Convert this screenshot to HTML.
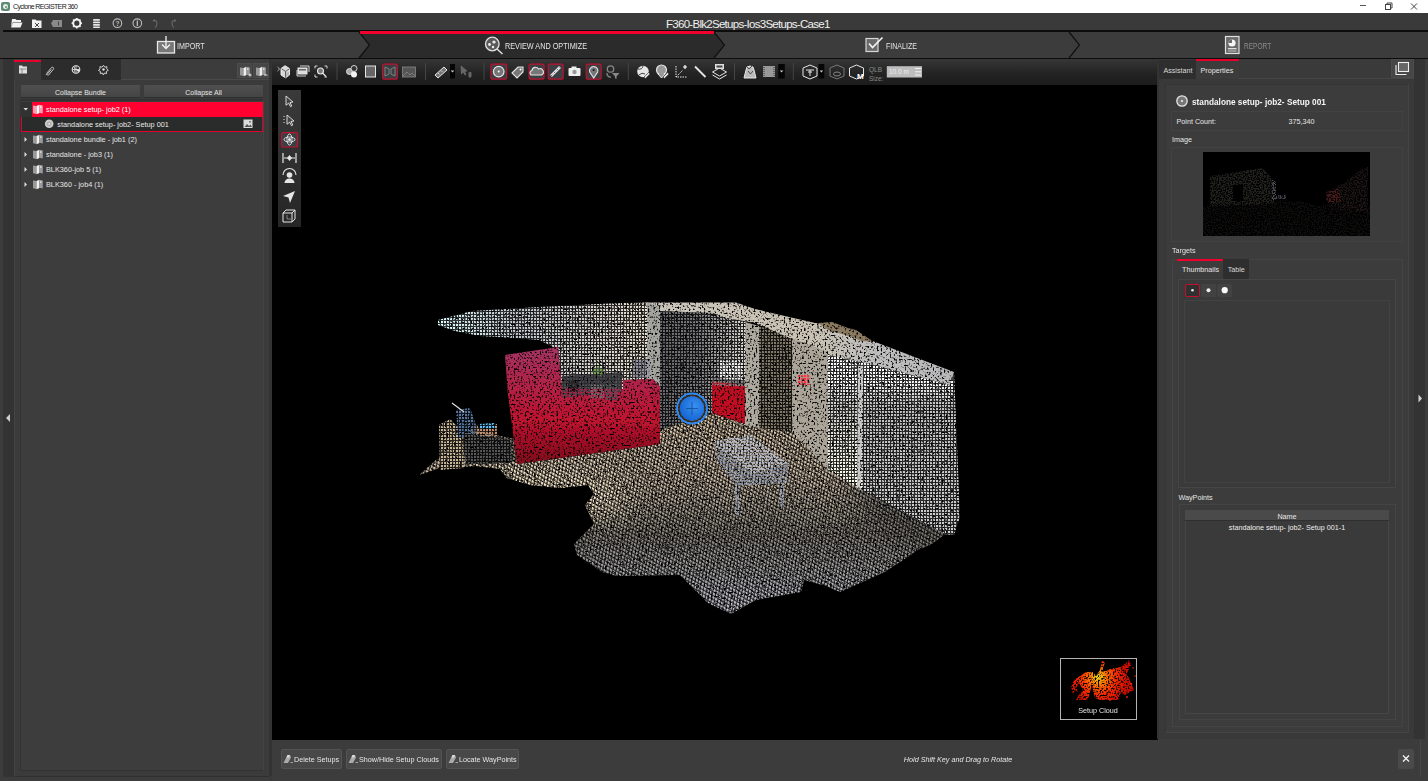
<!DOCTYPE html>
<html><head><meta charset="utf-8">
<style>
*{box-sizing:border-box;margin:0;padding:0}
html,body{width:1428px;height:781px;overflow:hidden;background:#3c3c3c;font-family:"Liberation Sans",sans-serif;color:#e6e6e6}
.a{position:absolute}
.t{position:absolute;white-space:nowrap;line-height:1}
svg{position:absolute;overflow:visible}
</style></head><body>
<!-- title bar -->
<div class="a" style="left:0;top:0;width:1428px;height:13px;background:#fff"></div>
<div class="a" style="left:1px;top:2px;width:9px;height:9px;border-radius:2px;background:#5f8a74"></div>
<div class="a" style="left:3px;top:4px;width:5px;height:5px;border-radius:50%;background:#e8efe9"></div>
<div class="a" style="left:5px;top:6px;width:2px;height:2px;border-radius:50%;background:#5f8a74"></div>
<div class="t" style="left:13px;top:3.2px;font-size:7px;color:#1a1a1a;letter-spacing:-0.62px">Cyclone REGISTER 360</div>
<div class="a" style="left:1360px;top:5px;width:6px;height:1px;background:#555"></div>
<svg class="a" style="left:0;top:0" width="1428" height="13"><rect x="1385.5" y="4.5" width="5" height="5" fill="none" stroke="#444" stroke-width="1"/><path d="M1387,4.5 v-1.5 h5 v5 h-1.5" fill="none" stroke="#444" stroke-width="1"/></svg>
<svg class="a" style="left:0;top:0" width="1428" height="13"><path d="M1411,3.5 l6,6 M1417,3.5 l-6,6" stroke="#444" stroke-width="1"/></svg>

<!-- top bar -->
<div class="a" style="left:0;top:13px;width:1428px;height:18px;background:#3a3a3a"></div>
<svg class="a" style="left:0;top:0" width="200" height="32">
 <g fill="#f2f2f2">
  <path d="M12,19 h3.5 l1,1 h4.5 v2 h-8 l-2,5 z"/><path d="M13,22.5 h9.5 l-2,5 h-9.5 z"/>
  <path d="M32,19.5 h3.5 l1,1 h5 v7.5 h-9.5 z"/>
 </g>
 <path d="M35,23 l4,4 M39,23 l-4,4" stroke="#444" stroke-width="1"/>
 <path d="M53,20 h9 v7 h-9 l-2,-3.5 z" fill="#8a8a8a"/><rect x="58" y="21.5" width="1" height="4" fill="#444"/>
 <g transform="translate(76.8,23.2)"><circle r="3.6" fill="none" stroke="#f2f2f2" stroke-width="2"/>
  <g stroke="#f2f2f2" stroke-width="1.6"><path d="M0,-5.2 v2 M0,5.2 v-2 M-5.2,0 h2 M5.2,0 h-2 M-3.7,-3.7 l1.4,1.4 M3.7,3.7 l-1.4,-1.4 M-3.7,3.7 l1.4,-1.4 M3.7,-3.7 l-1.4,1.4"/></g></g>
 <g fill="#e8e8e8"><rect x="93" y="19" width="7" height="1.8" rx="0.9"/><rect x="93" y="21.5" width="7" height="1.8" rx="0.9"/><rect x="93" y="24" width="7" height="1.8" rx="0.9"/><rect x="93" y="26.5" width="7" height="1.5" rx="0.7"/></g>
 <circle cx="117.4" cy="23.2" r="4.3" fill="none" stroke="#bdbdbd" stroke-width="1.1"/><text x="117.4" y="26" font-size="6.5" text-anchor="middle" fill="#bdbdbd" font-family="Liberation Sans" font-weight="bold">?</text>
 <circle cx="137.3" cy="23.2" r="4.3" fill="none" stroke="#bdbdbd" stroke-width="1.1"/><rect x="136.7" y="20.5" width="1.3" height="5.5" fill="#bdbdbd"/>
 <path d="M153.5,20.5 q3.5,-0.5 3.5,3 q0,2.5 -2,4" fill="none" stroke="#6a6a6a" stroke-width="1.1"/><path d="M152.5,20.5 l2,-1.8 v3.6 z" fill="#6a6a6a"/>
 <path d="M175.5,20.5 q-3.5,-0.5 -3.5,3 q0,2.5 2,4" fill="none" stroke="#6a6a6a" stroke-width="1.1"/><path d="M176.5,20.5 l-2,-1.8 v3.6 z" fill="#6a6a6a"/>
</svg>
<div class="t" style="left:666px;top:19px;font-size:11.5px;color:#f0f0f0;letter-spacing:-0.72px">F360-Blk2Setups-Ios3Setups-Case1</div>
<div class="a" style="left:3px;top:30px;width:1425px;height:2px;background:#0c0c0c"></div>

<!-- stepper -->
<div class="a" style="left:0;top:32px;width:1428px;height:26px;background:#3c3c3c"></div>
<svg class="a" style="left:0;top:0" width="1428" height="60">
  <polygon points="359,32 714,32 724.5,45 714,58 359,58 369.5,45" fill="#2b2b2b"/>
  <polyline points="359,32 369.5,45 359,58" fill="none" stroke="#111" stroke-width="1.2"/>
  <polyline points="714,32 724.5,45 714,58" fill="none" stroke="#111" stroke-width="1.2"/>
  <polyline points="1069,32 1079.5,45 1069,58" fill="none" stroke="#111" stroke-width="1.2"/>
  <rect x="360" y="31" width="354" height="3" fill="#f0002d"/>
</svg>
<div class="a" style="left:0;top:58px;width:1428px;height:1px;background:#0c0c0c"></div>
<svg class="a" style="left:0;top:0" width="1428" height="60">
 <rect x="157.5" y="41.5" width="17" height="11.5" fill="#777" stroke="#e8e8e8" stroke-width="1.3"/>
 <path d="M166,36 v12" stroke="#f4f4f4" stroke-width="1.3"/><path d="M162,44.5 l4,4 l4,-4" fill="none" stroke="#f4f4f4" stroke-width="1.3"/>
 <circle cx="492.3" cy="44" r="6.8" fill="#5a5a5a" stroke="#e0e0e0" stroke-width="1.3"/>
 <circle cx="489.5" cy="44.5" r="1.4" fill="#eee"/><circle cx="494" cy="42" r="1.6" fill="#eee"/><circle cx="493" cy="47" r="1.2" fill="#eee"/>
 <path d="M497,49 l5.5,5" stroke="#e0e0e0" stroke-width="1.5"/>
 <rect x="866" y="38.5" width="12" height="13" fill="#6a6a6a" stroke="#d6d6d6" stroke-width="1.2"/>
 <path d="M869,43.5 l3.5,4 l10,-10" fill="none" stroke="#f4f4f4" stroke-width="1.6"/>
 <rect x="1225.5" y="36.5" width="13.5" height="17" fill="#6a6a6a" stroke="#e0e0e0" stroke-width="1.2"/>
 <circle cx="1232" cy="43" r="3.6" fill="#f4f4f4"/><path d="M1232,43 v-3.6 a3.6,3.6 0 0 0 -3.6,3.6 z" fill="#6a6a6a"/>
 <rect x="1228" y="48" width="8.5" height="1.3" fill="#ddd"/><rect x="1228" y="50.5" width="8.5" height="1" fill="#bbb"/>
</svg>
<div class="t" style="left:177px;top:43px;font-size:8.2px;color:#e4e4e4;transform:scaleX(0.87);transform-origin:left">IMPORT</div>
<div class="t" style="left:505.3px;top:43px;font-size:8.2px;color:#e4e4e4;transform:scaleX(0.888);transform-origin:left">REVIEW AND OPTIMIZE</div>
<div class="t" style="left:885.7px;top:43px;font-size:8.2px;color:#e4e4e4;transform:scaleX(0.86);transform-origin:left">FINALIZE</div>
<div class="t" style="left:1243.5px;top:43px;font-size:8.2px;color:#8c8c8c;transform:scaleX(0.8);transform-origin:left">REPORT</div>

<!-- main left strips -->
<div class="a" style="left:3px;top:59px;width:11px;height:718px;background:#333"></div>
<svg class="a" style="left:0;top:0" width="20" height="430"><polygon points="10,414 6,418 10,422" fill="#cfcfcf"/></svg>

<!-- left panel -->
<div class="a" style="left:14px;top:59px;width:256px;height:718px;background:#3b3b3b"></div>
<div class="a" style="left:121px;top:59px;width:148px;height:21px;background:#3c3c3c;border-bottom:1px solid #4a4a4a"></div>
<div class="a" style="left:41px;top:59px;width:80px;height:21px;background:#2c2c2c"></div>
<div class="a" style="left:14px;top:59px;width:27px;height:21px;background:#3c3c3c"></div>
<div class="a" style="left:14px;top:60px;width:27px;height:2px;background:#e8002c"></div>
<div class="a" style="left:237px;top:63px;width:15px;height:15px;background:#464646;border:1px solid #4c4c4c"></div>
<div class="a" style="left:253px;top:63px;width:16px;height:15px;background:#464646;border:1px solid #4c4c4c"></div>
<div class="a" style="left:14px;top:80px;width:256px;height:697px;background:#3b3b3b;border:1px solid #444;border-top:none;border-bottom-color:#2f2f2f"></div>
<div class="a" style="left:20px;top:99px;width:244px;height:672px;background:#3d3d3d;border:1px solid #333;border-top-width:2px;border-right-color:#444"></div>
<div class="a" style="left:21px;top:85px;width:119px;height:12px;background:linear-gradient(#4f4f4f,#454545);border-radius:1px;box-shadow:0 1px 0 #2e2e2e"></div>
<div class="a" style="left:144px;top:85px;width:119px;height:12px;background:linear-gradient(#4f4f4f,#454545);border-radius:1px;box-shadow:0 1px 0 #2e2e2e"></div>
<div class="t" style="left:80.5px;top:88.5px;font-size:7px;color:#e6e6e6;transform:translateX(-50%)">Collapse Bundle</div>
<div class="t" style="left:203.5px;top:88.5px;font-size:7px;color:#e6e6e6;transform:translateX(-50%)">Collapse All</div>
<div class="a" style="left:21px;top:102px;width:11px;height:15px;background:#323232"></div>
<div class="a" style="left:32px;top:102px;width:231px;height:15px;background:#ff0030"></div>
<div class="a" style="left:21px;top:117px;width:242px;height:15px;background:#2a2b2b;border:1.5px solid #e0002c;border-top:none"></div>
<svg class="a" style="left:0;top:0" width="280" height="200">
 <g fill="#ddd"><polygon points="23.5,108 28,108 25.75,110.5"/>
 <polygon points="24.5,137 27,139.5 24.5,142"/><polygon points="24.5,152 27,154.5 24.5,157"/><polygon points="24.5,167 27,169.5 24.5,172"/><polygon points="24.5,182 27,184.5 24.5,187"/></g>
 <path d="M33,105.5 l3.5,0.5 v8 l-3.5,-0.8 z" fill="#f5a0b0"/><path d="M36.5,106.0 l3,-1.2 v8.2 l-3,1.2 z" fill="#ffffff"/><path d="M39.5,104.8 l3.3,0.6 v8 l-3.3,-0.6 z" fill="#f5a0b0"/><circle cx="40.8" cy="107.1" r="0.8" fill="#ffffff"/><path d="M33,135.5 l3.5,0.5 v8 l-3.5,-0.8 z" fill="#9a9a9a"/><path d="M36.5,136.0 l3,-1.2 v8.2 l-3,1.2 z" fill="#f0f0f0"/><path d="M39.5,134.8 l3.3,0.6 v8 l-3.3,-0.6 z" fill="#9a9a9a"/><circle cx="40.8" cy="137.1" r="0.8" fill="#f0f0f0"/><path d="M33,150.5 l3.5,0.5 v8 l-3.5,-0.8 z" fill="#9a9a9a"/><path d="M36.5,151.0 l3,-1.2 v8.2 l-3,1.2 z" fill="#f0f0f0"/><path d="M39.5,149.8 l3.3,0.6 v8 l-3.3,-0.6 z" fill="#9a9a9a"/><circle cx="40.8" cy="152.1" r="0.8" fill="#f0f0f0"/><path d="M33,165.5 l3.5,0.5 v8 l-3.5,-0.8 z" fill="#9a9a9a"/><path d="M36.5,166.0 l3,-1.2 v8.2 l-3,1.2 z" fill="#f0f0f0"/><path d="M39.5,164.8 l3.3,0.6 v8 l-3.3,-0.6 z" fill="#9a9a9a"/><circle cx="40.8" cy="167.1" r="0.8" fill="#f0f0f0"/><path d="M33,180.5 l3.5,0.5 v8 l-3.5,-0.8 z" fill="#9a9a9a"/><path d="M36.5,181.0 l3,-1.2 v8.2 l-3,1.2 z" fill="#f0f0f0"/><path d="M39.5,179.8 l3.3,0.6 v8 l-3.3,-0.6 z" fill="#9a9a9a"/><circle cx="40.8" cy="182.1" r="0.8" fill="#f0f0f0"/>
 <circle cx="49.2" cy="123.8" r="4.3" fill="#cfcfcf"/><circle cx="49.2" cy="123.8" r="2.6" fill="#b0b0b0"/><circle cx="49.2" cy="123.8" r="0.9" fill="#eee"/>
 <rect x="243.5" y="119.5" width="9" height="8.5" fill="#ddd"/><path d="M244.5,127 l2.5,-3 l2,2 l1.5,-1.5 l1.5,2.5 z" fill="#555"/><circle cx="250" cy="121.8" r="0.9" fill="#555"/>
 <!-- tab icons -->
 <rect x="19" y="66.5" width="8" height="7" fill="#e0e0e0"/><rect x="19" y="65.5" width="3.5" height="1.5" fill="#e0e0e0"/><path d="M19.5,69 h7 M22,69 v4" stroke="#666" stroke-width="0.7"/>
 <path d="M46.5,73.5 l5,-6 a1.3,1.3 0 0 1 2,1.6 l-5,6 a0.8,0.8 0 0 1 -1.2,-1 l4,-4.6" fill="none" stroke="#d0d0d0" stroke-width="0.9"/><path d="M45.8,74.5 l1.2,-0.3" stroke="#d0d0d0" stroke-width="0.9"/>
 <circle cx="76" cy="69.5" r="3.8" fill="none" stroke="#e8e8e8" stroke-width="1.1"/><path d="M72.5,69.5 h7 M76,66 v7 M74,66.8 q2,2.7 0,5.4" stroke="#e8e8e8" stroke-width="0.8" fill="none"/><path d="M76,69.5 l3.5,0 a3.5,3.5 0 0 1 -1.2,2.7 z" fill="#e8e8e8"/>
 <g transform="translate(103.5,69.5)"><path d="M0,-4.2 l1.2,1.8 l2.2,-0.4 l-0.2,2.2 l1.6,1.5 l-1.9,1 l0.1,2.2 l-2.1,-0.6 l-1,2 l-1,-2 l-2.1,0.6 l0.1,-2.2 l-1.9,-1 l1.6,-1.5 l-0.2,-2.2 l2.2,0.4 z" fill="none" stroke="#e0e0e0" stroke-width="0.9"/><circle r="1.2" fill="#e0e0e0"/></g>
 <!-- header buttons -->
 <path d="M240.0,67.5 l3.5,0.5 v8 l-3.5,-0.8 z" fill="#9a9a9a"/><path d="M243.5,68.0 l3,-1.2 v8.2 l-3,1.2 z" fill="#f0f0f0"/><path d="M246.5,66.8 l3.3,0.6 v8 l-3.3,-0.6 z" fill="#9a9a9a"/><circle cx="247.8" cy="69.1" r="0.8" fill="#f0f0f0"/><path d="M248.5,75 h3 M250,73.5 v3" stroke="#eee" stroke-width="0.9"/><path d="M256.0,67.5 l3.5,0.5 v8 l-3.5,-0.8 z" fill="#9a9a9a"/><path d="M259.5,68.0 l3,-1.2 v8.2 l-3,1.2 z" fill="#f0f0f0"/><path d="M262.5,66.8 l3.3,0.6 v8 l-3.3,-0.6 z" fill="#9a9a9a"/><circle cx="263.8" cy="69.1" r="0.8" fill="#f0f0f0"/><path d="M264,75 h3.5" stroke="#eee" stroke-width="0.9"/>
</svg>
<div class="t" style="left:46px;top:105.7px;font-size:7.3px;color:#fff">standalone setup- job2 (1)</div>
<div class="t" style="left:57.3px;top:120.7px;font-size:7.3px;color:#eaeaea">standalone setup- job2- Setup 001</div>
<div class="t" style="left:46px;top:135.9px;font-size:7.3px;color:#e6e6e6">standalone bundle - job1 (2)</div>
<div class="t" style="left:46px;top:150.9px;font-size:7.3px;color:#e6e6e6">standalone - job3 (1)</div>
<div class="t" style="left:46px;top:165.9px;font-size:7.3px;color:#e6e6e6">BLK360-job 5 (1)</div>
<div class="t" style="left:46px;top:180.9px;font-size:7.3px;color:#e6e6e6">BLK360 - job4 (1)</div>

<!-- viewport -->
<div class="a" style="left:269px;top:59px;width:3px;height:719px;background:#333"></div>
<div class="a" style="left:272px;top:59px;width:886px;height:26px;background:linear-gradient(#363636,#222 60%,#1c1c1c)"></div>
<div class="a" style="left:272px;top:85px;width:886px;height:655px;background:#000"></div>
<svg class="a" style="left:0;top:0" width="1000" height="90"><path d="M277.5,67 l2.2,2 l-2.2,2" fill="none" stroke="#cfcfcf" stroke-width="0.8"/><path d="M281,68.5 l4,-2.8 l4.5,2.8 v6.5 l-4,2.8 l-4.5,-2.8 z" fill="#d8d8d8" stroke="#f0f0f0" stroke-width="0.9"/><path d="M281.5,68.8 l4,2.6 l4,-2.6 M285.5,71.4 v6.2" fill="none" stroke="#444" stroke-width="0.8"/><path d="M286.8,72.5 v4 M288.2,71.8 v4" stroke="#888" stroke-width="0.6"/><rect x="298" y="68" width="9" height="6" fill="#ddd" stroke="#e6e6e6"/><path d="M297,70 v6 h9 M300,66 h9 v6" fill="none" stroke="#e6e6e6" stroke-width="0.9"/><rect x="299" y="69" width="7" height="1.5" fill="#666"/><path d="M315,66 v2.5 M315,66 h2.5 M327,66 v2.5 M327,66 h-2.5 M315,77 v-2.5 M315,77 h2.5 M327,77 h-2.5" stroke="#e6e6e6" stroke-width="0.9"/><circle cx="320.5" cy="71" r="3" fill="#777" stroke="#e6e6e6" stroke-width="1.1"/><path d="M322.5,73 l3.5,3.5" stroke="#e6e6e6" stroke-width="1.3"/><rect x="336.5" y="63" width="1" height="17" fill="#444"/><circle cx="349.5" cy="71.5" r="3" fill="#aaa" stroke="#e6e6e6" stroke-width="0.9"/><circle cx="354" cy="68.5" r="3" fill="#333" stroke="#e6e6e6" stroke-width="0.9"/><circle cx="354" cy="74.5" r="3" fill="#f2f2f2"/><rect x="365.5" y="66" width="10" height="11" fill="#666" stroke="#e6e6e6" stroke-width="1"/><rect x="382.6" y="64.1" width="14.8" height="15.099999999999998" rx="2" fill="#3a3f44" stroke="#c0112e" stroke-width="1.2"/><path d="M385,67 l4,2 v5 l-4,2 z M395,67 l-4,2 v5 l4,2 z" fill="none" stroke="#888" stroke-width="0.9"/><rect x="402.5" y="67" width="13" height="10" fill="#555" stroke="#888" stroke-width="0.8"/><path d="M403,76 l4,-4 l3,3 l2,-2 l3,3" fill="none" stroke="#888" stroke-width="0.8"/><rect x="425" y="63" width="1" height="17" fill="#444"/><path d="M435,75 l9,-8 l3,3 l-9,8 z" fill="#777" stroke="#e6e6e6" stroke-width="1"/><path d="M438,73 l1.5,1.5 M441,70.5 l1.5,1.5" stroke="#e6e6e6" stroke-width="0.8"/><rect x="450" y="64" width="5" height="14.5" fill="#050505"/><polygon points="450.7,70.5 454.3,70.5 452.5,72.5" fill="#ccc"/><path d="M461,66 l6,5 l-2.5,0.5 l1.5,3 l-1,0.5 l-1.5,-3 l-2,2 z" fill="#666" stroke="#777" stroke-width="0.6"/><rect x="468.5" y="72" width="3" height="5.5" rx="1" fill="#666"/><rect x="483.5" y="63" width="1" height="17" fill="#444"/><rect x="490.90000000000003" y="64.1" width="15.699999999999978" height="15.099999999999998" rx="2" fill="#3a3f44" stroke="#c0112e" stroke-width="1.2"/><circle cx="498.7" cy="71.6" r="5.3" fill="#777" stroke="#e6e6e6" stroke-width="1.2"/><circle cx="498.7" cy="71.6" r="1" fill="#fff"/><path d="M512,73 l6,-6 h5 v5 l-6,6 z" fill="#777" stroke="#e6e6e6" stroke-width="1.1"/><circle cx="520.5" cy="69.5" r="1" fill="#fff"/><rect x="529.1" y="64.1" width="15.000000000000046" height="15.099999999999998" rx="2" fill="#3a3f44" stroke="#c0112e" stroke-width="1.2"/><path d="M531,75 a2.5,2.5 0 0 1 1,-4.5 a3.5,3.5 0 0 1 6.5,-1.5 a2.8,2.8 0 0 1 3,6 z" fill="#777" stroke="#e6e6e6" stroke-width="1.1"/><rect x="548.2" y="64.1" width="14.999999999999932" height="15.099999999999998" rx="2" fill="#3a3f44" stroke="#c0112e" stroke-width="1.2"/><path d="M551,76 l9,-9" stroke="#e6e6e6" stroke-width="2.6"/><path d="M551,76 l9,-9" stroke="#555" stroke-width="0.8" stroke-dasharray="2 2"/><rect x="568.5" y="68" width="12" height="8" rx="1" fill="#eee"/><rect x="571.5" y="66.5" width="5" height="2" fill="#eee"/><circle cx="574.5" cy="72" r="2.2" fill="#999"/><rect x="586.2" y="64.1" width="14.999999999999932" height="15.099999999999998" rx="2" fill="#3a3f44" stroke="#c0112e" stroke-width="1.2"/><path d="M593.7,78 l-4,-6 a4.2,4.2 0 1 1 8,0 z" fill="#777" stroke="#e6e6e6" stroke-width="1.1"/><circle cx="593.7" cy="70" r="1" fill="#111"/><circle cx="610.5" cy="69" r="3.2" fill="none" stroke="#888" stroke-width="1.3"/><path d="M607,73 a3.5,3.5 0 0 0 4,4" fill="none" stroke="#888" stroke-width="1.3"/><path d="M612,73 h7.5 l-3,3.5 v2.5 l-1.5,-0.8 v-1.7 z" fill="#888"/><rect x="627.8" y="63" width="1" height="17" fill="#444"/><circle cx="643" cy="71.5" r="5.8" fill="#e6e6e6"/><path d="M638,69 q4,1 5,-3 M639,75 q3,-3 6,-1" stroke="#444" stroke-width="1" fill="none"/><path d="M644,77 l4.5,-4.5 l1.5,1.5 l-4.5,4.5 z" fill="#ddd" stroke="#333" stroke-width="0.6"/><circle cx="661.5" cy="70" r="5" fill="#999" stroke="#e6e6e6" stroke-width="1.2"/><path d="M658,74 l3.5,4 l3.5,-4" fill="#999" stroke="#e6e6e6"/><path d="M663,77 l4.5,-4.5 l1.5,1.5 l-4.5,4.5 z" fill="#ddd" stroke="#333" stroke-width="0.6"/><path d="M676,66 v11 h11 M676,77 l7,-7" fill="none" stroke="#e6e6e6" stroke-width="1" stroke-dasharray="1.5 1"/><path d="M683,67 h4 M685,65 v4" stroke="#fff" stroke-width="1.2"/><path d="M695,66.5 l3,3 M697.5,69 l8,8" stroke="#e6e6e6" stroke-width="1.8"/><path d="M712.5,72 l7,-4 l7,4 l-7,4 z" fill="none" stroke="#e6e6e6" stroke-width="1"/><path d="M712.5,75 l7,4 l7,-4" fill="none" stroke="#e6e6e6" stroke-width="1"/><rect x="715" y="64" width="9" height="5" fill="#ddd"/><rect x="716.5" y="65.5" width="6" height="2" fill="#444"/><rect x="734" y="63" width="1" height="17" fill="#444"/><path d="M744,78 l2,-8 a4,4 0 0 1 8,0 l2,8 z" fill="#bbb" stroke="#e6e6e6" stroke-width="1"/><path d="M746,66 l3,3 l3,-3 M748,71 l2.5,3 l2.5,-3" stroke="#333" stroke-width="0.8" fill="none"/><rect x="763" y="66" width="12" height="11" fill="#999"/><path d="M764,67 v9 M774,67 v9" stroke="#333" stroke-width="1" stroke-dasharray="1 1"/><rect x="778.3" y="64" width="6.5" height="14.5" fill="#050505"/><polygon points="779.75,70.5 783.3499999999999,70.5 781.55,72.5" fill="#ccc"/><rect x="792.8" y="63" width="1" height="17" fill="#444"/><path d="M803,68 l7,-3 l7,3 v8 l-7,3 l-7,-3 z" fill="none" stroke="#e6e6e6" stroke-width="1"/><path d="M806,70 h8 M810,70 v6 M808,72 h4" stroke="#e6e6e6" stroke-width="1"/><rect x="818.5" y="64" width="5.7999999999999545" height="14.5" fill="#050505"/><polygon points="819.6,70.5 823.1999999999999,70.5 821.4,72.5" fill="#ccc"/><path d="M830,68 l7,-3 l7,3 v8 l-7,3 l-7,-3 z" fill="none" stroke="#777" stroke-width="1"/><ellipse cx="837" cy="74" rx="3.5" ry="2" fill="none" stroke="#888" stroke-width="1"/><path d="M849.5,68 l7,-3 l7,3 v8 l-7,3 l-7,-3 z" fill="none" stroke="#e6e6e6" stroke-width="1"/><text x="857" y="78.5" font-size="8" font-weight="bold" font-family="Liberation Sans" fill="#fff">M</text><rect x="886.8" y="66.2" width="35.2" height="11.3" fill="#bdbdbd"/><path d="M915,68.5 h6 M915,71.8 h6 M915,75 h6" stroke="#f2f2f2" stroke-width="1"/></svg><div class="t" style="left:869px;top:64.5px;font-size:6.5px;color:#8a8a8a;line-height:9.5px">QLB<br>Size:</div><div class="t" style="left:889px;top:68.5px;font-size:6.5px;color:#eee">10.0 m</div><div class="a" style="left:278px;top:90px;width:23px;height:137px;background:linear-gradient(#3a3a3a,#262626)"></div><svg class="a" style="left:0;top:0" width="320" height="240"><rect x="281.6" y="132.6" width="16" height="14.4" rx="2" fill="#3a3f44" stroke="#c0112e" stroke-width="1.2"/><path d="M286,96 l7,6 l-3,0.5 l1.8,3.5 l-1.3,0.7 l-1.8,-3.5 l-2.7,2 z" fill="#444" stroke="#e6e6e6" stroke-width="0.9"/><path d="M287,115 l7,6 l-3,0.5 l1.8,3.5 l-1.3,0.7 l-1.8,-3.5 l-2.7,2 z" fill="#444" stroke="#e6e6e6" stroke-width="0.9"/><path d="M284,116 v1 M284,119 v1 M284,122 v1" stroke="#e6e6e6"/><ellipse cx="289.5" cy="139.5" rx="5.5" ry="2.5" fill="none" stroke="#e6e6e6" stroke-width="1"/><ellipse cx="289.5" cy="139.5" rx="2.5" ry="5.5" fill="none" stroke="#e6e6e6" stroke-width="1"/><circle cx="289.5" cy="139.5" r="1.5" fill="#e6e6e6"/><path d="M283,153 v10 M296,153 v10 M284,158 h11" stroke="#e6e6e6" stroke-width="1.2"/><path d="M289.5,155 l2.5,3 l-2.5,3 l-2.5,-3 z" fill="#e6e6e6"/><circle cx="289.5" cy="175" r="2.8" fill="#e6e6e6"/><path d="M284.5,183 a5,4.5 0 0 1 10,0 z" fill="#e6e6e6"/><path d="M283,175 a6.5,6.5 0 0 1 13,0" fill="none" stroke="#e6e6e6" stroke-width="1.1"/><path d="M283,196 l12,-5 l-5,12 l-1.5,-5.5 z" fill="#e6e6e6"/><path d="M283,213 h9 v9 h-9 z M283,213 l3,-3 h9 l-3,3 M295,210 v9 l-3,3" fill="none" stroke="#e6e6e6" stroke-width="1"/><path d="M287,215 v4 h4" fill="none" stroke="#aaa" stroke-width="0.7"/></svg>
<!--CLOUD--><svg class="a" style="left:0;top:0" width="1428" height="781">
<defs>
<filter id="n85" filterUnits="userSpaceOnUse" x="272" y="85" width="886" height="655">
 <feTurbulence type="fractalNoise" baseFrequency="0.537" numOctaves="1" seed="3" result="n"/>
 <feColorMatrix in="n" type="matrix" values="0 0 0 0 1  0 0 0 0 1  0 0 0 0 1  6 0 0 0 -1.8" result="m"/>
 <feComposite in="SourceGraphic" in2="m" operator="in"/></filter>
<filter id="bl" x="-20%" y="-20%" width="140%" height="140%"><feGaussianBlur stdDeviation="12"/></filter>
<pattern id="grid" width="3" height="3" patternUnits="userSpaceOnUse">
 <rect width="3" height="3" fill="#383838"/><rect x="0" y="0" width="2" height="2" fill="#fff"/></pattern>
<pattern id="grid2" width="3.4" height="3.4" patternUnits="userSpaceOnUse" patternTransform="rotate(30) skewX(20)">
 <rect width="3.4" height="3.4" fill="#303030"/><rect x="0" y="0" width="2.3" height="2.3" fill="#fff"/></pattern>
<mask id="mW" maskUnits="userSpaceOnUse" x="272" y="85" width="886" height="655"><rect x="272" y="85" width="886" height="655" fill="url(#grid)"/></mask>
<pattern id="gridR" width="3" height="3" patternUnits="userSpaceOnUse"><rect width="3" height="3" fill="#141414"/><rect x="0" y="0" width="2" height="2" fill="#fff"/></pattern>
<mask id="mR" maskUnits="userSpaceOnUse" x="272" y="85" width="886" height="655"><rect x="272" y="85" width="886" height="655" fill="url(#gridR)"/></mask>
<mask id="mF" maskUnits="userSpaceOnUse" x="272" y="85" width="886" height="655"><rect x="272" y="85" width="886" height="655" fill="url(#grid2)"/></mask>
<linearGradient id="gf1" gradientUnits="userSpaceOnUse" x1="0" y1="420" x2="0" y2="612">
 <stop offset="0" stop-color="#e6d1b3"/><stop offset="0.3" stop-color="#d5c4af"/><stop offset="0.6" stop-color="#918d84"/><stop offset="1" stop-color="#c8c8d5"/></linearGradient>
<linearGradient id="gwall" gradientUnits="userSpaceOnUse" x1="440" y1="0" x2="660" y2="0">
 <stop offset="0" stop-color="#dffdff"/><stop offset="0.35" stop-color="#c2c6ce"/><stop offset="1" stop-color="#e8dfce"/></linearGradient>
<linearGradient id="gright" gradientUnits="userSpaceOnUse" x1="0" y1="355" x2="0" y2="535">
 <stop offset="0" stop-color="#ffffff"/><stop offset="0.15" stop-color="#ffffff"/><stop offset="0.28" stop-color="#c2c2c2"/><stop offset="1" stop-color="#cecece"/></linearGradient>
<linearGradient id="gred" gradientUnits="userSpaceOnUse" x1="0" y1="350" x2="0" y2="465">
 <stop offset="0" stop-color="#a53260"/><stop offset="0.6" stop-color="#bf1330"/><stop offset="1" stop-color="#7f0a1a"/></linearGradient>
<linearGradient id="gdark" gradientUnits="userSpaceOnUse" x1="660" y1="0" x2="745" y2="0"><stop offset="0" stop-color="#69696d"/><stop offset="0.45" stop-color="#7a7a7e"/><stop offset="1" stop-color="#dfdbd7"/></linearGradient>
<linearGradient id="gceil" gradientUnits="userSpaceOnUse" x1="640" y1="0" x2="954" y2="0"><stop offset="0" stop-color="#cbc6bd"/><stop offset="0.55" stop-color="#c9c2b3"/><stop offset="0.75" stop-color="#bfbfbf"/><stop offset="1" stop-color="#b8b8ba"/></linearGradient>
<linearGradient id="gcorner" gradientUnits="userSpaceOnUse" x1="0" y1="390" x2="0" y2="480"><stop offset="0" stop-color="#ffffec" stop-opacity="0"/><stop offset="1" stop-color="#ffffec" stop-opacity="1"/></linearGradient>
<radialGradient id="gblue" cx="0.6" cy="0.4" r="0.7"><stop offset="0" stop-color="#3a90f0"/><stop offset="1" stop-color="#1060d0"/></radialGradient>
</defs>
<g filter="url(#n85)"><g mask="url(#mF)">
<polygon points="419,475 440,468 476,466 500,469 507,478 530,485 560,488 588,485 594,494 585,505 594,524 574,544 577,555 602,572 616,576 680,575 708,603 731,614 756,600 801,592 804,580 826,586 840,592 885,572 918,550 932,544 958,524 958,470 855,470 800,400 700,390 560,390 520,440 470,430" fill="url(#gf1)"/>
<clipPath id="cfloor"><polygon points="419,475 440,468 476,466 500,469 507,478 530,485 560,488 588,485 594,494 585,505 594,524 574,544 577,555 602,572 616,576 680,575 708,603 731,614 756,600 801,592 804,580 826,586 840,592 885,572 918,550 932,544 958,524 958,470 855,470 800,400 700,390 560,390 520,440 470,430"/></clipPath><g clip-path="url(#cfloor)"><g filter="url(#bl)">
<polygon points="440,462 600,470 640,500 600,520 480,490" fill="#ffefd1"/>
<polygon points="850,475 958,515 935,548 870,525" fill="#77736f" opacity="0.9"/>
</g></g>
<polygon points="470,430 520,440 515,462 480,465 460,450" fill="#888077"/>
</g></g>
<g fill="#000">
<polygon points="438,320 472,311 539,307 598,304 647,302 660,307 660,440 560,440 558,347 553,347 539,340 514,338 480,336 455,331 438,325"/>
<polygon points="659,311 713,313 726,318 745,322 745,425 712,413 660,430"/>
<polygon points="759,326 792,338 792,432 759,428"/>
<polygon points="828,352 870,362 954,372 957,443 960,517 954,535 947,535 855,486 828,470"/>
</g>
<g filter="url(#n85)"><g mask="url(#mW)">
<polygon points="438,320 472,311 539,307 598,304 647,302 660,307 660,440 560,440 558,347 553,347 539,340 514,338 480,336 455,331 438,325" fill="url(#gwall)"/>
<polygon points="659,311 713,313 726,318 745,322 745,425 712,413 660,430" fill="url(#gdark)"/>
<polygon points="759,326 792,338 792,432 759,428" fill="#837a69"/>
<polygon points="828,352 870,362 954,372 957,443 960,517 954,535 947,535 855,486 828,470" fill="url(#gright)"/>
<polygon points="828,390 862,400 862,488 855,486 828,470" fill="url(#gcorner)"/>
</g></g>
<g fill="#000">
<polygon points="640,302.5 736,302.5 755,309 813,322.6 832,325.5 870,340 954,372 950,385 870,364 824,354 794,340 755,323 726,318 713,313 659,311 647,306"/>
<polygon points="647,302 660,307 660,430 647,430"/><polygon points="745,322 759,326 759,428 745,425"/><polygon points="792,338 828,352 828,470 792,432"/>
</g>
<g filter="url(#n85)">
<polygon points="640,302.5 736,302.5 755,309 813,322.6 832,325.5 870,340 954,372 950,385 870,364 824,354 794,340 755,323 726,318 713,313 659,311 647,306" fill="url(#gceil)"/>
<polygon points="647,302 660,307 660,430 647,430" fill="#a5a5a0"/>
<polygon points="745,322 759,326 759,428 745,425" fill="#aeaaa0"/>
<polygon points="792,338 828,352 828,470 792,432" fill="#aca599"/>
<polygon points="858,366 863,366 861,490 857,488" fill="#c8c8c8"/>
<polygon points="818,323 832,322 848,328 856,330 874,342 862,341 845,335 828,330" fill="#8a7a60"/>
</g>
<g fill="#000">
<polygon points="505,355 558,347 562,390 508,396"/><polygon points="508,394 562,388 623,389 623,380 653,379 660,387 660,444 517,464"/>
<polygon points="712,381 745,385 745,424 712,413"/>
</g>
<g filter="url(#n85)"><g>
<polygon points="505,355 558,347 562,390 508,396" fill="url(#gred)"/>
<polygon points="508,394 562,388 623,389 623,380 653,379 660,387 660,444 517,464" fill="url(#gred)"/>
<polygon points="712,381 745,385 745,424 712,413" fill="#bf0e21"/>
</g></g><g fill="#000"><polygon points="439,425 450,419 462,430 464,468 440,470"/><polygon points="463,433 510,440 512,462 466,464"/></g><g filter="url(#n85)"><g mask="url(#mW)">
<polygon points="562,376 622,372 622,392 562,398" fill="#404048"/>
<rect x="568" y="380" width="10" height="12" fill="#202028"/><rect x="590" y="385" width="14" height="14" fill="#6a6a70"/><rect x="606" y="384" width="12" height="16" fill="#50505a"/>
<polygon points="590,372 598,366 606,372 600,376" fill="#70a050"/>
<rect x="633" y="359" width="17" height="19" fill="#9090a0"/>
<rect x="720" y="361" width="22" height="19" fill="#f0f0f0"/>
<polygon points="712,378 745,380 745,387 712,385" fill="#808080"/>
<polygon points="439,425 450,419 462,430 464,468 440,470" fill="#c8b898"/>
<polygon points="456,410 470,408 476,425 474,438 458,438" fill="#5878a0"/>
<polygon points="475,425 497,424 497,436 476,436" fill="#c09070"/>
<polygon points="478,424 494,423 496,428 478,429" fill="#60c8ff"/>
<polygon points="463,433 510,440 512,462 466,464" fill="#585858"/>
<polygon points="714,441 750,435 788,463 752,474" fill="#b8c0d0" opacity="0.9"/>
<polygon points="714,441 752,474 788,463 787,483 737,486 716,460" fill="#8894a8" opacity="0.9"/>
<rect x="735" y="486" width="4" height="30" fill="#909cb0"/><rect x="780" y="482" width="4" height="25" fill="#909cb0"/>
<rect x="798" y="375" width="12" height="10" fill="#ff3040"/>
</g></g>
<line x1="452" y1="403" x2="464" y2="412" stroke="#e0e0e0" stroke-width="1.2"/>
<circle cx="692" cy="408.5" r="15" fill="none" stroke="#2a8af8" stroke-width="2"/>
<circle cx="692" cy="408.5" r="13" fill="none" stroke="#3a2a18" stroke-width="1.6"/>
<circle cx="692" cy="408.5" r="12.2" fill="url(#gblue)"/>
<path d="M692,402 v13 M686,408.5 h12" stroke="#0c3a80" stroke-width="0.6"/>
</svg><!--/CLOUD-->

<!-- right panel -->
<div class="a" style="left:1157px;top:59px;width:2px;height:680px;background:#333"></div>
<div class="a" style="left:1159px;top:59px;width:255px;height:680px;background:#393939"></div>
<div class="a" style="left:1159px;top:59px;width:255px;height:20px;background:#3a3a3a;border-bottom:1px solid #454545"></div>
<div class="a" style="left:1159px;top:59.5px;width:37px;height:19.5px;background:#2e2e2e"></div>
<div class="a" style="left:1196px;top:59px;width:43px;height:20px;background:#3c3c3c"></div>
<div class="a" style="left:1196px;top:59px;width:43px;height:2px;background:#e8002c"></div>
<div class="a" style="left:1391px;top:59px;width:23px;height:19px;background:#464646;border:1px solid #4c4c4c"></div>
<svg class="a" style="left:0;top:0" width="1428" height="90"><rect x="1398.5" y="62.5" width="10" height="9" fill="#666" stroke="#eee" stroke-width="1.1"/><path d="M1396,65 v9.5 h10.5" fill="none" stroke="#eee" stroke-width="1.1"/></svg>
<div class="t" style="left:1163.4px;top:66.91px;font-size:7.2px;color:#d8d8d8;">Assistant</div>
<div class="t" style="left:1200.5px;top:66.91px;font-size:7.2px;color:#e6e6e6;">Properties</div>
<div class="a" style="left:1165px;top:84px;width:244px;height:649px;background:#3c3c3c;border:1px solid #353535;border-right-color:#444;border-bottom-color:#444"></div>
<svg class="a" style="left:0;top:0" width="1428" height="120"><circle cx="1182" cy="101" r="5.2" fill="#777" stroke="#e8e8e8" stroke-width="1.3"/><circle cx="1182" cy="101" r="1.1" fill="#eee"/></svg>
<div class="t" style="left:1192px;top:98.4px;font-size:8.4px;color:#f4f4f4;font-weight:bold;transform:scaleX(0.985);transform-origin:left">standalone setup- job2- Setup 001</div>
<div class="a" style="left:1171px;top:110.5px;width:232px;height:20.5px;background:#3c3c3c;border:1px solid #424242"></div>
<div class="t" style="left:1176.5px;top:117.71px;font-size:7.2px;color:#e6e6e6;">Point Count:</div>
<div class="t" style="left:1288.5px;top:117.71px;font-size:7.2px;color:#e6e6e6;">375,340</div>
<div class="t" style="left:1172px;top:136.21px;font-size:7.2px;color:#e6e6e6;">Image</div>
<div class="a" style="left:1171px;top:146.5px;width:232px;height:95.5px;background:#3c3c3c;border:1px solid #424242"></div>
<div class="a" style="left:1203px;top:152.3px;width:167.3px;height:83.3px;background:#000"></div>
<svg class="a" style="left:0;top:0" width="1428" height="240">
 <defs><filter id="thn" filterUnits="userSpaceOnUse" x="1203" y="152" width="168" height="84"><feTurbulence type="fractalNoise" baseFrequency="0.71" seed="5" result="n"/><feColorMatrix in="n" type="matrix" values="0 0 0 0 1  0 0 0 0 1  0 0 0 0 1  6 0 0 0 -2.4" result="m"/><feComposite in="SourceGraphic" in2="m" operator="in"/></filter></defs>
 <g filter="url(#thn)">
  <polygon points="1203,206 1280,200 1300,201 1320,206 1340,201 1370,206 1370,236 1203,236" fill="#0c0b0a"/>
  <polygon points="1210,176 1262,168 1274,180 1274,204 1210,206" fill="#24211f"/>
  <rect x="1233" y="185" width="10" height="16" fill="#000"/>
  <polygon points="1272,180 1276,182 1276,200 1272,200" fill="#505058"/>
  <polygon points="1275,195 1286,195 1286,199 1275,199" fill="#404048"/>
  <polygon points="1326,192 1345,182 1360,170 1368,166 1368,212 1340,210 1326,200" fill="#1a1212"/>
  <polygon points="1326,193 1338,189 1342,201 1328,203" fill="#4a1c1c"/>
 </g>
</svg>
<div class="a" style="left:1059.5px;top:658px;width:77.5px;height:61.5px;border:1px solid #b4b4b4;background:#000"></div>
<svg class="a" style="left:0;top:0" width="1428" height="781">
 <defs><radialGradient id="gsc" gradientUnits="userSpaceOnUse" cx="1098" cy="677" r="28"><stop offset="0" stop-color="#e8e020"/><stop offset="0.25" stop-color="#ff8000"/><stop offset="0.6" stop-color="#ff3000"/><stop offset="1" stop-color="#d01000"/></radialGradient>
 <filter id="scn" filterUnits="userSpaceOnUse" x="1060" y="658" width="77" height="50"><feTurbulence type="fractalNoise" baseFrequency="0.6" seed="9" result="n"/><feColorMatrix in="n" type="matrix" values="0 0 0 0 1  0 0 0 0 1  0 0 0 0 1  6 0 0 0 -2.1" result="m"/><feComposite in="SourceGraphic" in2="m" operator="in"/></filter></defs>
 <g fill="url(#gsc)" filter="url(#scn)">
  <polygon points="1071,687 1074,680 1080,676 1086,672 1093,672 1096,676 1100,670 1102,661 1105,662 1102,672 1110,669 1120,667 1126,663 1129,660 1131,665 1127,673 1124,684 1118,700 1100,700 1093,697 1086,700 1076,700 1080,693 1075,690 1073,694"/>
  <polygon points="1118,672 1128,676 1134,690 1125,695 1118,690"/>
 </g>
 <g fill="#000"><polygon points="1088,700 1092,684 1095,700"/><polygon points="1076,688 1079,683 1083,690 1080,695"/></g>
 <g fill="#e02000"><circle cx="1131" cy="684" r="1.2"/><circle cx="1127" cy="697" r="1"/><circle cx="1135" cy="676" r="0.8"/><circle cx="1133" cy="668" r="0.8"/><circle cx="1110" cy="700" r="1"/></g>
</svg>
<div class="t" style="left:1098px;top:706.9px;font-size:7.2px;color:#e6e6e6;transform:translateX(-50%)">Setup Cloud</div>

<div class="t" style="left:1172px;top:247.21px;font-size:7.2px;color:#e6e6e6;">Targets</div>
<div class="a" style="left:1171.5px;top:258.5px;width:231.5px;height:468.5px;background:#3c3c3c;border:1px solid #444"></div>
<div class="a" style="left:1177px;top:258.5px;width:46px;height:20px;background:#3c3c3c"></div>
<div class="a" style="left:1223px;top:259px;width:26px;height:19.5px;background:#2e2e2e"></div>
<div class="a" style="left:1177.3px;top:258.5px;width:45.6px;height:2.5px;background:#f0002d"></div>
<div class="t" style="left:1182px;top:266.21px;font-size:7.2px;color:#e6e6e6;">Thumbnails</div>
<div class="t" style="left:1227.7px;top:266.21px;font-size:7.2px;color:#d8d8d8;">Table</div>
<div class="a" style="left:1178px;top:278.5px;width:218px;height:209.0px;background:#3a3a3a;border:1px solid #454545"></div>
<div class="a" style="left:1184.8px;top:283.5px;width:15.4px;height:13px;background:#303030;border:1.3px solid #c0112e;border-radius:2px"></div>
<div class="a" style="left:1200.8px;top:283.5px;width:15.4px;height:13px;background:#424242;border-radius:2px"></div>
<div class="a" style="left:1216.9px;top:283.5px;width:15.6px;height:13px;background:#424242;border-radius:2px"></div>
<svg class="a" style="left:0;top:0" width="1428" height="300"><circle cx="1192.5" cy="290.2" r="1.3" fill="#eee"/><circle cx="1208.5" cy="290.2" r="2" fill="#eee"/><circle cx="1224.7" cy="290.2" r="3.1" fill="#fafafa"/></svg>
<div class="a" style="left:1183.5px;top:300px;width:206.5px;height:182.5px;background:#3a3a3a;border:1px solid #424242"></div>
<div class="t" style="left:1178.5px;top:493.91px;font-size:7.2px;color:#e6e6e6;">WayPoints</div>
<div class="a" style="left:1178.7px;top:503.7px;width:217.29999999999995px;height:216.3px;background:#3b3b3b;border:1px solid #444"></div>
<div class="a" style="left:1185px;top:510px;width:204px;height:204px;background:#3a3a3a;border:1px solid #464646"></div>
<div class="a" style="left:1185px;top:510px;width:204px;height:11px;background:#4a4a4a;border-bottom:1px solid #2f2f2f"></div>
<div class="t" style="left:1287px;top:512.91px;font-size:7.2px;color:#e6e6e6;transform:translateX(-50%)">Name</div>
<div class="t" style="left:1287px;top:524.21px;font-size:7.2px;color:#eeeeee;transform:translateX(-50%)">standalone setup- job2- Setup 001-1</div>
<div class="a" style="left:1414px;top:59px;width:11px;height:680px;background:#333"></div><div class="a" style="left:1425px;top:59px;width:3px;height:680px;background:#3c3c3c"></div>
<svg class="a" style="left:0;top:0" width="1428" height="420"><polygon points="1418.5,394.5 1422,398.5 1418.5,402.5" fill="#d0d0d0"/></svg>


<!-- bottom bar -->
<div class="a" style="left:272px;top:740px;width:1156px;height:41px;background:#3c3c3c"></div>
<div class="a" style="left:269px;top:776px;width:3px;height:5px;background:#3a3a3a"></div>
<div class="a" style="left:281px;top:749px;width:61px;height:20px;background:#484848;border:1px solid #535353;border-radius:2px"></div>
<svg class="a" style="left:0;top:0" width="1428" height="781"><path d="M283.5,763 l4,-8 h2.5 l1,2.5 l-3,5.5 z" fill="#aaa"/><path d="M287.5,755 h2.5 l-1,2.5 h-2.5 z" fill="#ddd"/><rect x="290.5" y="762" width="2.5" height="0.8" fill="#bbb"/></svg>
<div class="t" style="left:294px;top:755.91px;font-size:7.2px;color:#e6e6e6;">Delete Setups</div>
<div class="a" style="left:346px;top:749px;width:96px;height:20px;background:#484848;border:1px solid #535353;border-radius:2px"></div>
<svg class="a" style="left:0;top:0" width="1428" height="781"><path d="M348.5,763 l4,-8 h2.5 l1,2.5 l-3,5.5 z" fill="#aaa"/><path d="M352.5,755 h2.5 l-1,2.5 h-2.5 z" fill="#ddd"/><rect x="355.5" y="762" width="2.5" height="0.8" fill="#bbb"/></svg>
<div class="t" style="left:359px;top:755.91px;font-size:7.2px;color:#e6e6e6;">Show/Hide Setup Clouds</div>
<div class="a" style="left:446px;top:749px;width:73px;height:20px;background:#484848;border:1px solid #535353;border-radius:2px"></div>
<svg class="a" style="left:0;top:0" width="1428" height="781"><path d="M448.5,763 l4,-8 h2.5 l1,2.5 l-3,5.5 z" fill="#aaa"/><path d="M452.5,755 h2.5 l-1,2.5 h-2.5 z" fill="#ddd"/><rect x="455.5" y="762" width="2.5" height="0.8" fill="#bbb"/></svg>
<div class="t" style="left:459px;top:755.91px;font-size:7.2px;color:#e6e6e6;">Locate WayPoints</div>
<div class="t" style="left:958px;top:755.91px;font-size:7.2px;color:#e6e6e6;font-style:italic;transform:translateX(-50%)">Hold Shift Key and Drag to Rotate</div>
<div class="a" style="left:1398px;top:749px;width:16px;height:19.5px;background:#4a4a4a;border-radius:2px"></div><div class="a" style="left:1420px;top:740px;width:1px;height:37px;background:#474747"></div>
<svg class="a" style="left:0;top:0" width="1428" height="781"><path d="M1403,755.5 l6,6 M1409,755.5 l-6,6" stroke="#f2f2f2" stroke-width="1.4"/></svg>

</body></html>
